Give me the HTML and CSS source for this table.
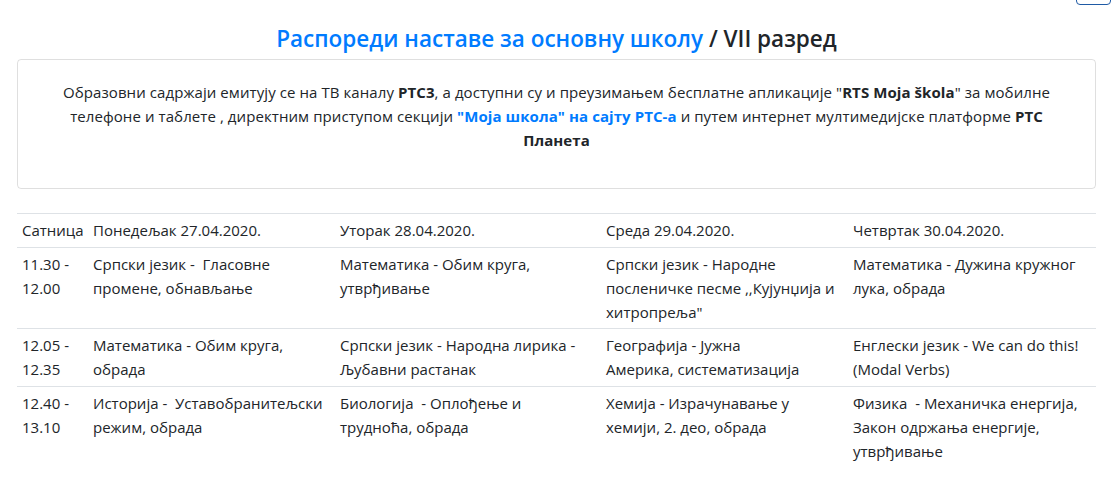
FILE: index.html
```html
<!DOCTYPE html>
<html lang="sr">
<head>
<meta charset="utf-8">
<title>Распореди наставе</title>
<link rel="stylesheet" href="styles.css">
</head>
<body>
<div class="page">
  <a class="top-btn" href="#"></a>
  <h4 class="title"><a href="#">Распореди наставе за основну школу</a> / VII разред</h4>
  <div class="card">
    <p class="card-text">Образовни садржаји емитују се на ТВ каналу <b>РТС3</b>, а доступни су и преузимањем бесплатне апликације "<b>RTS Moja škola</b>" за мобилне телефоне и таблете , директним приступом секцији <a class="card-link" href="#">"Моја школа" на сајту РТС-а</a> и путем интернет мултимедијске платформе <b>РТС Планета</b></p>
  </div>
  <table class="schedule">
    <colgroup>
      <col class="c-time">
      <col class="c-day1">
      <col class="c-day2">
      <col class="c-day3">
      <col class="c-day4">
    </colgroup>
    <tbody>
      <tr>
        <td>Сатница</td>
        <td>Понедељак 27.04.2020.</td>
        <td>Уторак 28.04.2020.</td>
        <td>Среда 29.04.2020.</td>
        <td>Четвртак 30.04.2020.</td>
      </tr>
      <tr>
        <td>11.30 - 12.00</td>
        <td>Српски језик - &nbsp;Гласовне промене, обнављање</td>
        <td>Математика - Обим круга, утврђивање</td>
        <td>Српски језик - Народне посленичке песме ,,Кујунџија и хитропреља"</td>
        <td>Математика - Дужина кружног лука, обрада</td>
      </tr>
      <tr>
        <td>12.05 - 12.35</td>
        <td>Математика - Обим круга, обрада</td>
        <td>Српски језик - Народна лирика - Љубавни растанак</td>
        <td>Географија - Јужна<br>Америка, систематизација</td>
        <td>Енглески језик - We can do this! (Modal Verbs)</td>
      </tr>
      <tr>
        <td>12.40 - 13.10</td>
        <td>Историја - &nbsp;Уставобранитељски режим, обрада</td>
        <td>Биологија &nbsp;- Оплођење и трудноћа, обрада</td>
        <td>Хемија - Израчунавање у хемији, 2. део, обрада</td>
        <td>Физика &nbsp;- Механичка енергија, Закон одржања енергије, утврђивање</td>
      </tr>
    </tbody>
  </table>
</div>
</body>
</html>
```

FILE: styles.css
```css
html, body {
  margin: 0;
  padding: 0;
  background: #fff;
}
body {
  font-family: "Open Sans", "Noto Sans", sans-serif;
  font-size: 15px;
  line-height: 24px;
  color: #212529;
}
.page {
  position: relative;
  padding: 24px 18px 0 17px;
}
.top-btn {
  position: absolute;
  top: -30px;
  right: 3px;
  width: 35px;
  height: 35px;
  border: 1px solid #1f5aa5;
  border-radius: 4px;
  box-sizing: border-box;
}
.title {
  margin: 0 0 6px;
  text-align: center;
  font-size: 22.5px;
  line-height: 29px;
  font-weight: 600;
  color: #212529;
}
.title a {
  color: #007bff;
  text-decoration: none;
}
.card {
  border: 1px solid rgba(0, 0, 0, 0.125);
  border-radius: 4px;
  padding: 20px 30px;
  margin-bottom: 24px;
}
.card-text {
  margin: 0 0 16px;
  text-align: center;
  letter-spacing: 0.08px;
}
.card-text b {
  font-weight: 700;
}
.card-link {
  color: #007bff;
  font-weight: 700;
  text-decoration: none;
}
.schedule {
  width: 100%;
  border-collapse: collapse;
  table-layout: fixed;
}
.c-time { width: 71px; }
.c-day1 { width: 247px; }
.c-day2 { width: 266px; }
.c-day3 { width: 247px; }
.c-day4 { width: 248px; }
.schedule td {
  padding: 4.3px 5px;
  vertical-align: top;
  border-top: 1px solid #dee2e6;
  font-size: 15px;
  line-height: 24px;
}
```
